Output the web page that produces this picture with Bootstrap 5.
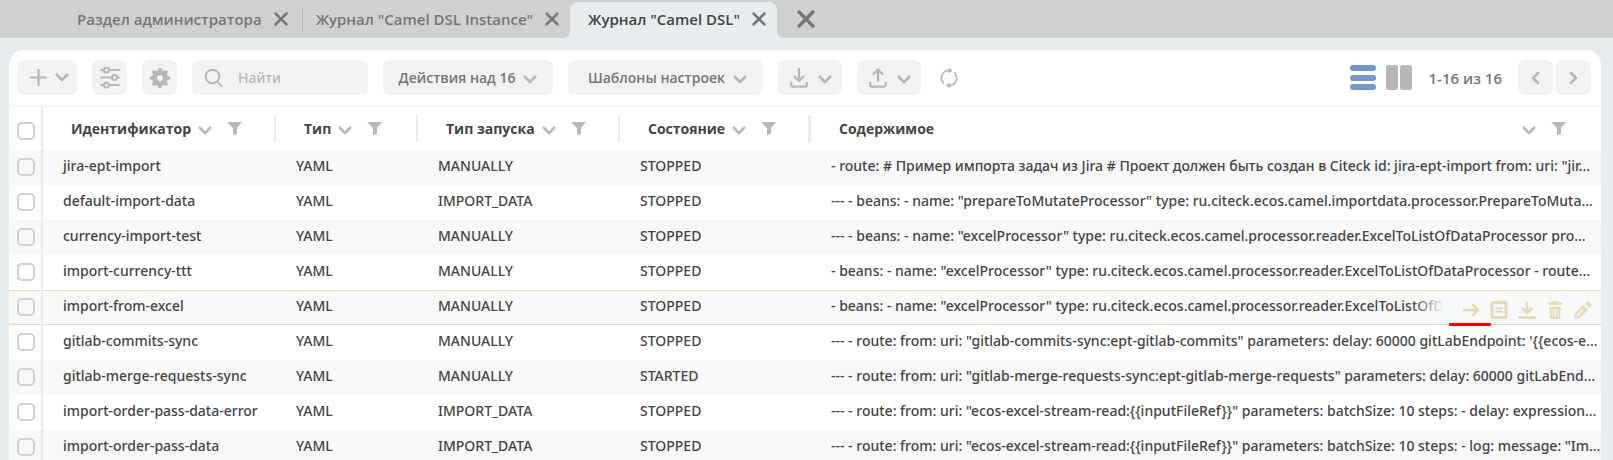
<!DOCTYPE html>
<html lang="ru">
<head>
<meta charset="utf-8">
<meta name="viewport" content="width=device-width, initial-scale=1">
<title>Журнал "Camel DSL"</title>
<link rel="stylesheet" href="https://cdn.jsdelivr.net/npm/bootstrap@5.3.0/dist/css/bootstrap.min.css">
<style>
  body { font-family: "Open Sans", sans-serif; font-size: 14px; line-height: 20px; font-weight: 600; color: #444; background: #e7ecef; }
  button, input { font-weight: inherit; }
  svg { display: block; flex: none; fill: none; stroke: currentColor; stroke-linecap: round; stroke-linejoin: round; }
  .plain-btn { border: 0; padding: 0; background: none; color: inherit; }

  /* tab strip */
  .tab-strip { background: #d0d0d0; height: 38px; padding-left: 63px; font-size: 15px; color: #767676; }
  .tab-item { padding: 0 14px; gap: 12px; height: 38px; }
  .tab-item a { color: inherit; text-decoration: none; white-space: nowrap; }
  .tab-item + .tab-item:not(.current) { padding-right: 11px; background: linear-gradient(#b5b5b5, #b5b5b5) 0 8px / 1px 24px no-repeat; }
  .tab-item.current { position: relative; height: 36px; padding: 0 11px 2px 18px; background: #e7ecef; border-radius: 8px 8px 0 0; }
  .tab-item.current a { color: #444; }
  .tab-item.current::before, .tab-item.current::after { content: ""; position: absolute; bottom: 0; width: 6px; height: 6px; }
  .tab-item.current::before { right: 100%; background: radial-gradient(circle at 0 0, transparent 6px, #e7ecef 6px); }
  .tab-item.current::after { left: 100%; background: radial-gradient(circle at 100% 0, transparent 6px, #e7ecef 6px); }

  /* journal panel */
  .journal { margin: 12px 12px 0 9px; background: #fff; border-radius: 15px 15px 0 0; }
  .tools { padding: 10px 10px 10px 8px; gap: 15px; color: #b7b7b7; }
  .tool-btn { height: 35px; border: 0; border-radius: 7px; background: #f2f2f2; color: #b7b7b7; padding: 0; }
  .tool-btn span { color: #767676; }
  .square { width: 35px; }
  .transfer { width: 64px; gap: 10px; padding-left: 2px; }
  .arrow-down { margin-top: 3px; }
  .search-box { width: 176px; height: 35px; border-radius: 7px; background: #f2f2f2; padding-left: 12px; gap: 14px; font-family: "Noto Sans", "Open Sans", sans-serif; font-weight: 500; }
  .search-box input { border: 0; background: none; outline: 0; width: 110px; padding: 0; color: #444; }
  .search-box input::placeholder { color: #b7b7b7; opacity: 1; }
  .views { gap: 10px; padding-right: 1px; }
  .counter { font-size: 15px; color: #767676; }
  .pager { gap: 3px; }

  /* journal grid */
  .grid { width: 100%; table-layout: fixed; border-collapse: separate; border-spacing: 0; border-top: 2px solid #f7f7f7; font-weight: 500; }
  .grid th { height: 43px; padding: 0; font-weight: 700; vertical-align: middle; }
  .grid th .head { height: 27px; padding-left: 28px; gap: 7px; border-right: 2px solid #e7ecef; color: #b7b7b7; }
  .grid th .head > span { color: #444; }
  .grid th .head.wide-edge { border-right-width: 3px; }
  .grid th .head.last { border-right: 0; padding-right: 35px; }
  .grid td { height: 35px; padding: 0 0 4px 20px; white-space: nowrap; overflow: hidden; text-overflow: ellipsis; vertical-align: middle; font-family: "Noto Sans", "Open Sans", sans-serif; }
  .grid tbody tr:nth-child(odd) { background: #f8f8f8; }
  .grid .pick { padding: 0 0 1px 8px; border-right: 2px solid #e7ecef; vertical-align: middle; }
  .grid th.pick { padding-top: 6px; }
  .pick input { appearance: none; display: block; width: 18px; height: 18px; margin: 0; border: 2px solid #d0d0d0; border-radius: 5px; background: transparent; }
  .grid tr.hovered td { position: relative; background-image: linear-gradient(#e4dab5, #e4dab5), linear-gradient(#e4dab5, #e4dab5); background-size: 100% 1px; background-position: 0 0, 0 100%; background-repeat: no-repeat; background-origin: border-box; }
  .row-actions { position: absolute; top: 1px; right: 0; bottom: 1px; padding: 5px 9px 0 50px; gap: 10px; color: #e4dab5; background: linear-gradient(90deg, rgba(248,248,248,0), #f8f8f8 32px); }
  .row-actions .plain-btn { width: 18px; }
  .underlined { position: absolute; right: 110px; bottom: -2px; width: 42px; height: 3px; border-radius: 1px; background: #f00; }
</style>
</head>
<body class="vh-100 overflow-hidden">

<svg width="0" height="0" class="position-absolute" aria-hidden="true">
  <symbol id="cross" viewBox="0 0 14 14"><path d="M1.600 1.600l10.800 10.800M12.400 1.600L1.600 12.400" stroke-width="2.700"/></symbol>
  <symbol id="down" viewBox="0 0 14 9"><path d="M1.800 1.800L7 7l5.200-5.200" stroke-width="2.700"/></symbol>
  <symbol id="funnel" viewBox="0 0 15 13"><path d="M0 0h15L10 6v6l-4 1V6z" fill="currentColor" stroke="none"/></symbol>
</svg>

<nav class="tab-strip d-flex align-items-end">
  <div class="tab-item d-flex align-items-center"><a href="#">Раздел администратора</a><button class="plain-btn" aria-label="Закрыть"><svg width="14" height="14"><use href="#cross"/></svg></button></div>
  <div class="tab-item d-flex align-items-center"><a href="#">Журнал "Camel DSL Instance"</a><button class="plain-btn" aria-label="Закрыть"><svg width="14" height="14"><use href="#cross"/></svg></button></div>
  <div class="tab-item current d-flex align-items-center"><a href="#">Журнал "Camel DSL"</a><button class="plain-btn" aria-label="Закрыть"><svg width="14" height="14"><use href="#cross"/></svg></button></div>
  <button class="plain-btn ms-3 align-self-center ps-1" aria-label="Закрыть все"><svg width="18" height="18"><use href="#cross"/></svg></button>
</nav>

<main class="journal">
  <div class="tools d-flex align-items-center">
    <button class="tool-btn d-flex align-items-center justify-content-center gap-2 ps-1" style="width:60px" aria-label="Создать"><svg width="17" height="17" viewBox="0 0 17 17"><path d="M8.500 1v15M1 8.500h15" stroke-width="2.200"/></svg><svg width="14" height="9"><use href="#down"/></svg></button>
    <button class="tool-btn square d-flex align-items-center justify-content-center" aria-label="Настройка"><svg width="20" height="22" viewBox="0 0 20 22" stroke-width="2"><path d="M1 3h2.500M9.500 3H19M1 10.500h10.500M17.500 10.500H19M1 18h2.500M9.500 18H19"/><circle cx="6.500" cy="3" r="2.600"/><circle cx="14.500" cy="10.500" r="2.600"/><circle cx="6.500" cy="18" r="2.600"/></svg></button>
    <button class="tool-btn square d-flex align-items-center justify-content-center" aria-label="Параметры"><svg width="20" height="20" viewBox="0 0 20 20"><circle cx="10" cy="10" r="5.500" stroke-width="5"/><path d="M10 1.500v2M10 16.500v2M1.500 10h2M16.500 10h2M4 4l1.400 1.400M14.600 14.600L16 16M4 16l1.400-1.400M14.600 5.400L16 4" stroke-width="3.400"/></svg></button>
    <label class="search-box d-flex align-items-center"><svg width="20" height="20" viewBox="0 0 20 20" stroke-width="2"><circle cx="8.500" cy="8.500" r="6.800"/><path d="M13.500 14l4 4"/></svg><input type="text" placeholder="Найти" aria-label="Найти"></label>
    <button class="tool-btn d-flex align-items-center justify-content-center gap-2" style="width:170px"><span>Действия над 16</span><svg class="arrow-down" width="14" height="9"><use href="#down"/></svg></button>
    <button class="tool-btn d-flex align-items-center justify-content-end gap-2 pe-3" style="width:195px"><span>Шаблоны настроек</span><svg class="arrow-down" width="14" height="9"><use href="#down"/></svg></button>
    <button class="tool-btn transfer d-flex align-items-center justify-content-center" aria-label="Скачать"><svg width="18" height="20" viewBox="0 0 18 20" stroke-width="2.300"><path d="M9 1.200v11M4.500 8.500L9 13l4.500-4.500M1.200 15v1.600q0 2 2 2h11.600q2 0 2-2V15"/></svg><svg class="arrow-down" width="14" height="9"><use href="#down"/></svg></button>
    <button class="tool-btn transfer d-flex align-items-center justify-content-center" aria-label="Загрузить"><svg width="18" height="20" viewBox="0 0 18 20" stroke-width="2.300"><path d="M9 13V2M4.500 6L9 1.500 13.500 6M1.200 15v1.600q0 2 2 2h11.600q2 0 2-2V15"/></svg><svg class="arrow-down" width="14" height="9"><use href="#down"/></svg></button>
    <button class="plain-btn ms-1" aria-label="Обновить"><svg width="18" height="20" viewBox="0 0 18 20" stroke-width="1.700"><path d="M3.400 15A7.500 7.500 0 0 1 9 2.500M14.600 5A7.500 7.500 0 0 1 9 17.500"/><path d="M8.800.8l3.200 1.800-3 1.800zM9.200 15.600L6 17.400l3 1.800z" fill="currentColor" stroke-width="1"/></svg></button>

    <div class="ms-auto d-flex align-items-center">
      <div class="views d-flex">
        <button class="plain-btn" aria-label="Список"><svg width="26" height="26" viewBox="0 0 26 26" style="color:#7296cd"><g fill="currentColor" stroke="none"><rect width="26" height="6" rx="3"/><rect y="10" width="26" height="6" rx="3"/><rect y="19" width="26" height="6" rx="3"/></g></svg></button>
        <button class="plain-btn" aria-label="Предпросмотр"><svg width="26" height="26" viewBox="0 0 26 26"><g fill="currentColor" stroke="none"><rect width="12" height="25" rx="2.500"/><rect x="14" width="12" height="25" rx="2.500"/></g></svg></button>
      </div>
      <span class="counter ms-3">1-16 из 16</span>
      <div class="pager d-flex ms-3">
        <button class="tool-btn square d-flex align-items-center justify-content-center" aria-label="Назад"><svg width="9" height="14" viewBox="0 0 9 14"><path d="M7 2L2 7l5 5" stroke-width="2.500"/></svg></button>
        <button class="tool-btn square d-flex align-items-center justify-content-center" aria-label="Вперёд"><svg width="9" height="14" viewBox="0 0 9 14"><path d="M2 2l5 5-5 5" stroke-width="2.500"/></svg></button>
      </div>
    </div>
  </div>

  <table class="grid">
    <colgroup><col style="width:34px"><col style="width:233px"><col style="width:142px"><col style="width:202px"><col style="width:191px"><col></colgroup>
    <thead>
      <tr>
        <th class="pick"><input type="checkbox" aria-label="Выбрать все"></th>
        <th><div class="head d-flex align-items-center"><span>Идентификатор</span><svg class="arrow-down" width="14" height="9"><use href="#down"/></svg><svg class="ms-2" width="15" height="13"><use href="#funnel"/></svg></div></th>
        <th><div class="head d-flex align-items-center"><span>Тип</span><svg class="arrow-down" width="14" height="9"><use href="#down"/></svg><svg class="ms-2" width="15" height="13"><use href="#funnel"/></svg></div></th>
        <th><div class="head d-flex align-items-center"><span>Тип запуска</span><svg class="arrow-down" width="14" height="9"><use href="#down"/></svg><svg class="ms-2" width="15" height="13"><use href="#funnel"/></svg></div></th>
        <th><div class="head wide-edge d-flex align-items-center"><span>Состояние</span><svg class="arrow-down" width="14" height="9"><use href="#down"/></svg><svg class="ms-2" width="15" height="13"><use href="#funnel"/></svg></div></th>
        <th><div class="head last d-flex align-items-center"><span class="me-auto">Содержимое</span><svg class="arrow-down" width="14" height="9"><use href="#down"/></svg><svg class="ms-2" width="15" height="13"><use href="#funnel"/></svg></div></th>
      </tr>
    </thead>
    <tbody>
      <tr><td class="pick"><input type="checkbox" aria-label="jira-ept-import"></td><td>jira-ept-import</td><td>YAML</td><td>MANUALLY</td><td>STOPPED</td><td>- route: # Пример импорта задач из Jira # Проект должен быть создан в Citeck id: jira-ept-import from: uri: "jir…</td></tr>
      <tr><td class="pick"><input type="checkbox" aria-label="default-import-data"></td><td>default-import-data</td><td>YAML</td><td>IMPORT_DATA</td><td>STOPPED</td><td>--- - beans: - name: "prepareToMutateProcessor" type: ru.citeck.ecos.camel.importdata.processor.PrepareToMuta…</td></tr>
      <tr><td class="pick"><input type="checkbox" aria-label="currency-import-test"></td><td>currency-import-test</td><td>YAML</td><td>MANUALLY</td><td>STOPPED</td><td>--- - beans: - name: "excelProcessor" type: ru.citeck.ecos.camel.processor.reader.ExcelToListOfDataProcessor pro…</td></tr>
      <tr><td class="pick"><input type="checkbox" aria-label="import-currency-ttt"></td><td>import-currency-ttt</td><td>YAML</td><td>MANUALLY</td><td>STOPPED</td><td>- beans: - name: "excelProcessor" type: ru.citeck.ecos.camel.processor.reader.ExcelToListOfDataProcessor - route…</td></tr>
      <tr class="hovered"><td class="pick"><input type="checkbox" aria-label="import-from-excel"></td><td>import-from-excel</td><td>YAML</td><td>MANUALLY</td><td>STOPPED</td><td class="overflow-visible"><div class="text-truncate">- beans: - name: "excelProcessor" type: ru.citeck.ecos.camel.processor.reader.ExcelToListOfD</div>
        <div class="row-actions d-flex align-items-center">
          <button class="plain-btn" aria-label="Открыть"><svg width="18" height="18" viewBox="0 0 18 18" stroke-width="2.600"><path d="M2 9h13M11 4l5 5-5 5"/></svg></button>
          <button class="plain-btn" aria-label="Карточка"><svg width="18" height="18" viewBox="0 0 18 18"><rect x="2" y="1.500" width="14" height="15" rx="1" stroke-width="3"/><path d="M6 7.200h6M6 10.800h6" stroke-width="1.900"/></svg></button>
          <button class="plain-btn" aria-label="Скачать"><svg width="18" height="18" viewBox="0 0 18 18" stroke-width="2.600"><path d="M9 1.500v9.500M4.500 7.500L9 12l4.500-4.500M1.200 16.600h15.600"/></svg></button>
          <button class="plain-btn" aria-label="Удалить"><svg width="18" height="18" viewBox="0 0 18 18"><path d="M3 2.500h12M7 1.500h4" stroke-width="2.600"/><path d="M4.400 7h9.200l-.5 9.800H4.900z" stroke-width="2.200"/><path d="M7.400 7v9M10.600 7v9" stroke-width="1.600"/></svg></button>
          <button class="plain-btn" aria-label="Изменить"><svg width="18" height="18" viewBox="0 0 18 18"><path d="M13 .8q1-1 2 0l2.200 2.200q1 1 0 2l-2 2-4.200-4.200z" fill="currentColor" stroke="none"/><path d="M9.200 5.600l3.200 3.200L5 16.200l-3.600.5.500-3.600z" stroke-width="2.200"/><path d="M4.500 14l6.500-6.500" stroke-width="1"/></svg></button>
          <span class="underlined"></span>
        </div></td></tr>
      <tr><td class="pick"><input type="checkbox" aria-label="gitlab-commits-sync"></td><td>gitlab-commits-sync</td><td>YAML</td><td>MANUALLY</td><td>STOPPED</td><td>--- - route: from: uri: "gitlab-commits-sync:ept-gitlab-commits" parameters: delay: 60000 gitLabEndpoint: '{{ecos-e…</td></tr>
      <tr><td class="pick"><input type="checkbox" aria-label="gitlab-merge-requests-sync"></td><td>gitlab-merge-requests-sync</td><td>YAML</td><td>MANUALLY</td><td>STARTED</td><td>--- - route: from: uri: "gitlab-merge-requests-sync:ept-gitlab-merge-requests" parameters: delay: 60000 gitLabEndp…</td></tr>
      <tr><td class="pick"><input type="checkbox" aria-label="import-order-pass-data-error"></td><td>import-order-pass-data-error</td><td>YAML</td><td>IMPORT_DATA</td><td>STOPPED</td><td>--- - route: from: uri: "ecos-excel-stream-read:{{inputFileRef}}" parameters: batchSize: 10 steps: - delay: expression…</td></tr>
      <tr><td class="pick"><input type="checkbox" aria-label="import-order-pass-data"></td><td>import-order-pass-data</td><td>YAML</td><td>IMPORT_DATA</td><td>STOPPED</td><td>--- - route: from: uri: "ecos-excel-stream-read:{{inputFileRef}}" parameters: batchSize: 10 steps: - log: message: "Im…</td></tr>
    </tbody>
  </table>
</main>

<script src="https://cdn.jsdelivr.net/npm/bootstrap@5.3.0/dist/js/bootstrap.bundle.min.js"></script>
</body>
</html>
